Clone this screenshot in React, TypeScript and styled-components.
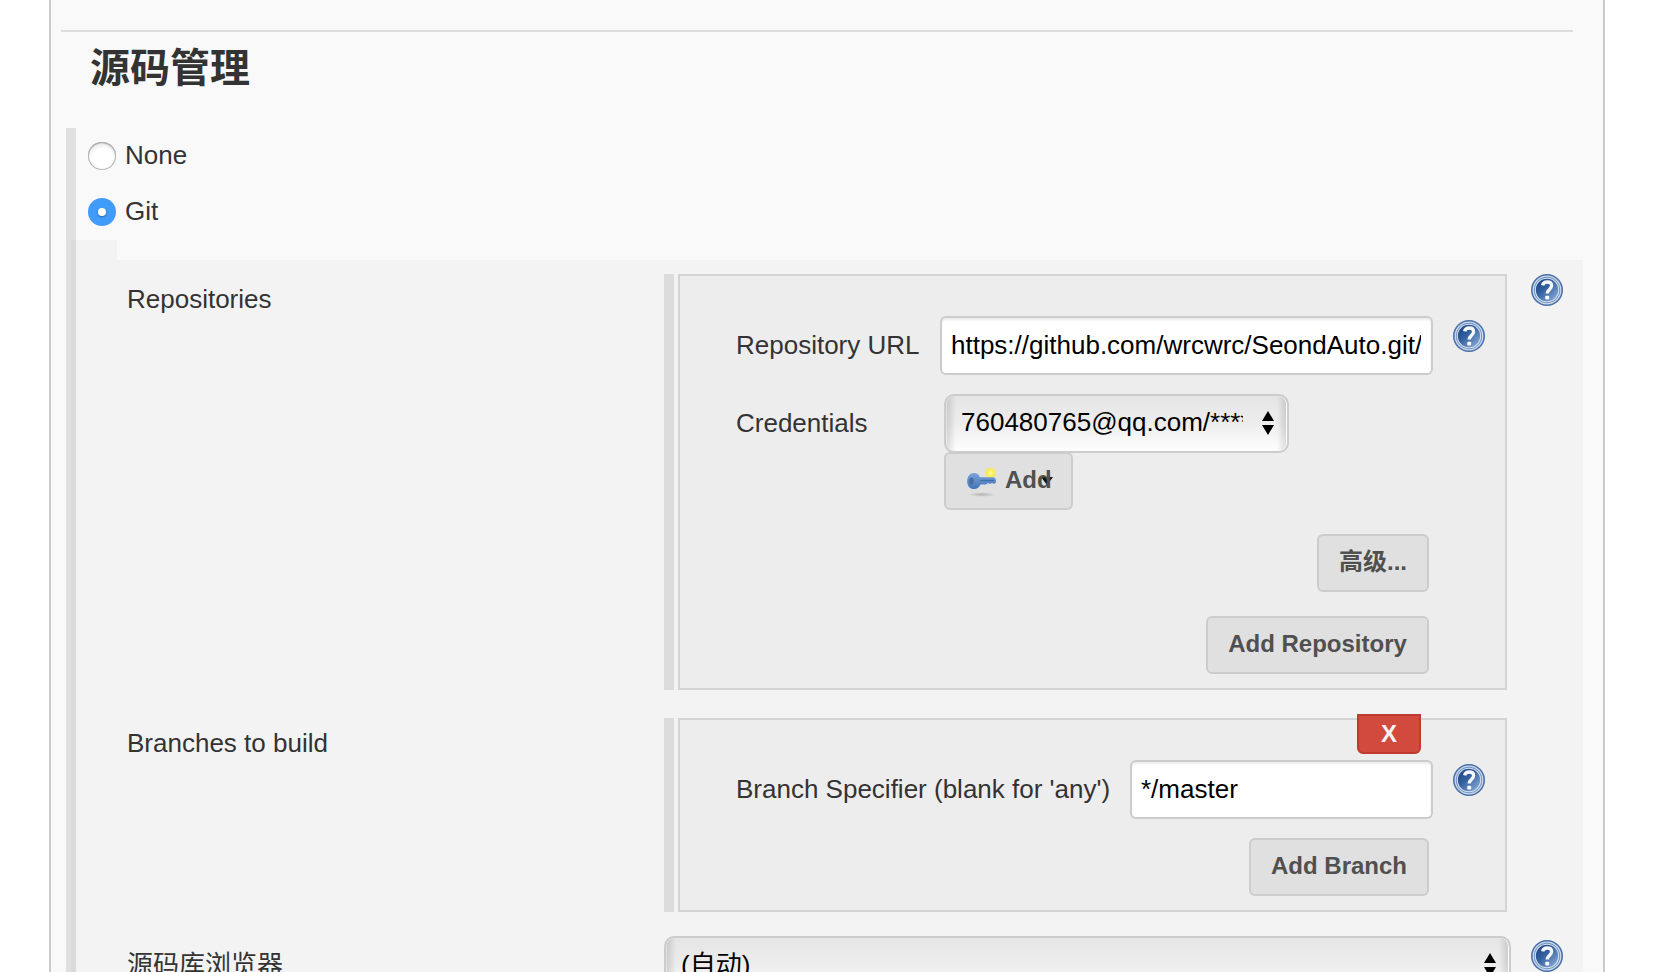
import React from "react";
import styled, { createGlobalStyle } from "styled-components";

const GlobalStyle = createGlobalStyle`
  *, *::before, *::after { box-sizing: border-box; }
  html, body { margin: 0; padding: 0; background: #fff; overflow: hidden; }
  body {
    font-family: "Liberation Sans", "Noto Sans CJK SC", sans-serif;
    font-size: 26px;
    line-height: 30px;
    color: #333;
  }
`;

const Page = styled.div`
  height: 972px;
  overflow: hidden;
  padding: 0 55px 0 49px;
`;

const Panel = styled.main`
  height: 972px;
  display: flex;
  flex-direction: column;
  border: solid #cacaca;
  border-width: 0 2px;
  background: #f9f9f9;
  padding: 30px 20px 0 10px;
`;

const Divider = styled.hr`
  flex: none;
  width: 1512px;
  height: 2px;
  margin: 0;
  border: 0;
  background: #ddd;
`;

const SectionTitle = styled.h2`
  flex: none;
  margin: 6px 0 0 29px;
  height: 90px;
  font-size: 40px;
  line-height: 60px;
  font-weight: 700;
`;

const ScmBlock = styled.section`
  flex: 1;
  min-height: 0;
  display: flex;
  margin-left: 5px;
  background: linear-gradient(#e0e0e0, #e0e0e0) 0 0 / 10px 100% no-repeat;
`;

const ScmContent = styled.div`
  flex: 1;
  display: flex;
  flex-direction: column;
  padding-left: 5px;
`;

const RadioList = styled.div`
  flex: none;
  height: 112px;
  padding: 14px 0 0 17px;
  display: flex;
  flex-direction: column;
  gap: 28px;
`;

const RadioRow = styled.label`
  height: 28px;
  display: flex;
  align-items: center;
  gap: 9px;
`;

const RadioDot = styled.span<{ $on?: boolean }>`
  width: 28px;
  height: 28px;
  border-radius: 50%;
  display: flex;
  align-items: center;
  justify-content: center;
  background: ${(p) => (p.$on ? "#419bf9" : "#fff")};
  box-shadow: ${(p) =>
    p.$on ? "none" : "inset 0 0 0 1px #b4b4b4, inset 0 1px 1px #8e8e8e, inset 0 3px 4px rgba(0,0,0,.12)"};
  &::after {
    content: "";
    width: 8px;
    height: 8px;
    border-radius: 50%;
    background: #fff;
    box-shadow: ${(p) => (p.$on ? "0 1px 2px rgba(0,0,0,.35)" : "none")};
  }
`;

const RadioText = styled.span`
  padding-bottom: 2px;
`;

const FormTab = styled.div`
  flex: none;
  width: 46px;
  height: 20px;
  background: rgba(0, 0, 0, 0.024);
`;

const GitForm = styled.div`
  flex: 1;
  display: flex;
  flex-direction: column;
  background: rgba(0, 0, 0, 0.024);
  padding-top: 14px;
`;

const FieldRow = styled.div<{ $gap: number }>`
  flex: none;
  display: grid;
  grid-template-columns: 593px 847px 1fr;
  align-items: start;
  margin-bottom: ${(p) => p.$gap}px;
`;

const FieldLabel = styled.div<{ $top: number }>`
  padding: ${(p) => p.$top}px 0 0 56px;
`;

const HelpCell = styled.div<{ $top?: number }>`
  padding: ${(p) => p.$top ?? 0}px 0 0 20px;
`;

const RepeatBox = styled.div<{ $h: number }>`
  width: 843px;
  height: ${(p) => p.$h}px;
  display: flex;
  gap: 4px;
  &::before {
    content: "";
    flex: none;
    width: 10px;
    background: #dcdcdc;
  }
`;

const BoxBody = styled.div`
  position: relative;
  flex: 1;
  min-width: 0;
  display: flex;
  flex-direction: column;
  border: 2px solid #d4d4d4;
  background: #ededed;
  padding: 40px 20px 0 56px;
`;

const EntryRow = styled.div`
  display: flex;
  align-items: flex-start;
`;

const EntryLabel = styled.div<{ $w: number }>`
  flex: none;
  width: ${(p) => p.$w}px;
  padding-top: 14px;
  white-space: nowrap;
`;

const CredentialLabel = styled(EntryLabel)`
  padding-top: 33px;
`;

const CredentialStack = styled.div`
  display: flex;
  flex-direction: column;
  align-items: flex-start;
  padding-top: 19px;
`;

const TextInput = styled.input`
  flex: 1;
  min-width: 0;
  height: 59px;
  padding: 0 10px 0 9px;
  border: 2px solid #ccc;
  border-radius: 6px;
  background: #fff;
  box-shadow: inset 0 2px 2px rgba(0, 0, 0, 0.075);
  font: inherit;
  color: #000;
  outline: none;
`;

const HelpButton = styled.a`
  display: block;
  flex: none;
  width: 32px;
  height: 32px;
  margin: 4px 0 0 20px;
`;

const SelectBox = styled.div<{ $w: number; $clip: number; $drop?: number }>`
  flex: none;
  width: ${(p) => p.$w}px;
  height: 59px;
  display: flex;
  align-items: flex-start;
  justify-content: space-between;
  padding: 11px 13px 0 15px;
  border: 2px solid #ccc;
  border-radius: 10px;
  background:
    linear-gradient(90deg, rgba(0,0,0,.14), rgba(0,0,0,0) 10px, rgba(0,0,0,0) calc(100% - 10px), rgba(0,0,0,.14)),
    linear-gradient(#e5e5e5, #ededed 50%, #fefefe);
  box-shadow: inset 1px 0 0 rgba(255,255,255,.45), inset -1px 0 0 #fff;
  color: #000;
  & > span {
    width: ${(p) => p.$clip}px;
    padding-top: ${(p) => p.$drop ?? 0}px;
    overflow: hidden;
    white-space: nowrap;
  }
  & > svg {
    display: block;
    margin-top: 4px;
  }
`;

const Button = styled.button<{ $w: number }>`
  width: ${(p) => p.$w}px;
  height: 58px;
  display: flex;
  align-items: flex-start;
  justify-content: center;
  padding: 11px 0 0;
  border: 2px solid #ccc;
  border-radius: 6px;
  background: #e0e0e0;
  font: 700 24px/30px "Liberation Sans", "Noto Sans CJK SC", sans-serif;
  color: #505050;
  white-space: nowrap;
`;

const AddButton = styled(Button)`
  position: relative;
  margin-top: -1px;
  justify-content: flex-start;
  padding-left: 20px;
  gap: 7px;
  & > svg:first-child {
    margin-top: 2px;
  }
  & > span {
    position: relative;
    z-index: 1;
  }
`;

const MenuCaret = styled.svg`
  position: absolute;
  left: 95px;
  top: 23px;
`;

const Actions = styled.div<{ $mt: number }>`
  display: flex;
  flex-direction: column;
  align-items: flex-end;
  gap: 24px;
  margin-top: ${(p) => p.$mt}px;
  padding-right: 56px;
`;

const DeleteButton = styled.button`
  position: absolute;
  top: -6px;
  right: 84px;
  width: 64px;
  height: 40px;
  padding: 0;
  border: 2px solid #bf3a30;
  border-radius: 0 0 6px 6px;
  background: #d24a3d;
  color: #f3f3f3;
  font: 700 24px/30px "Liberation Sans", sans-serif;
`;

const Help = () => (
  <svg width="32" height="32" viewBox="0 0 32 32" display="block" aria-label="help">
    <defs>
      <linearGradient id="ball" x1="0.1" y1="0.1" x2="0.9" y2="0.9">
        <stop offset="0" stopColor="#1f4788" />
        <stop offset="0.4" stopColor="#33609f" />
        <stop offset="1" stopColor="#86a9d6" />
      </linearGradient>
    </defs>
    <circle cx="16" cy="16" r="16" fill="#4870aa" />
    <circle cx="16" cy="16" r="13.8" fill="#6f90c0" stroke="#ccd8ea" strokeWidth="1.3" />
    <circle cx="16" cy="16" r="11.7" fill="url(#ball)" stroke="#d5e0ef" strokeWidth="1.1" />
    <path
      d="M11.6 11.4C12.2 8.9 14 8 16.2 8c2.8 0 4.4 1.5 4.4 3.8 0 3.6-4.4 3.7-4.4 7.6"
      fill="none"
      stroke="#f6f8fc"
      strokeWidth="3.3"
    />
    <rect x="14.2" y="21.8" width="4" height="3.8" rx="1" fill="#f6f8fc" />
  </svg>
);

const Arrows = () => (
  <svg width="12" height="24" viewBox="0 0 12 24">
    <path d="M6 0L12 10H0zM0 14H12L6 24z" fill="#000" />
  </svg>
);

const KeyIcon = () => (
  <svg width="32" height="32" viewBox="0 0 32 32">
    <defs>
      <radialGradient id="glow">
        <stop offset="0" stopColor="#fffb9a" />
        <stop offset="0.6" stopColor="#f7ec50" />
        <stop offset="1" stopColor="#f7ec50" stopOpacity="0" />
      </radialGradient>
      <radialGradient id="shade">
        <stop offset="0" stopColor="#000" stopOpacity="0.2" />
        <stop offset="1" stopColor="#000" stopOpacity="0" />
      </radialGradient>
      <linearGradient id="metal" x1="0" y1="0" x2="0" y2="1">
        <stop offset="0" stopColor="#7aa5d8" />
        <stop offset="1" stopColor="#4273b5" />
      </linearGradient>
    </defs>
    <ellipse cx="16" cy="27.5" rx="14" ry="2.4" fill="url(#shade)" />
    <circle cx="24.5" cy="6" r="6.4" fill="url(#glow)" />
    <path
      d="M8 6c3 0 5 1.600 6 4.200H28l2 2.200v3.200l-2 1.500-2-1-2 1-2-1-2 1.500h-5.500c-1 2.600-3.200 4.500-6.500 4.500C4 22.100 1.200 19 1.200 14.200S4 6 8 6z"
      fill="url(#metal)"
    />
    <ellipse cx="5.500" cy="14" rx="2.200" ry="3.500" fill="#4c6d9d" />
    <path d="M14 13.500H28" stroke="#3f6eae" strokeWidth="1.300" />
  </svg>
);

const HelpLink = () => (
  <HelpButton>
    <Help />
  </HelpButton>
);

export default function App() {
  return (
    <>
      <GlobalStyle />
      <Page>
        <Panel>
          <Divider />
          <SectionTitle>源码管理</SectionTitle>
          <ScmBlock>
            <ScmContent>
              <RadioList>
                <RadioRow>
                  <RadioDot />
                  <RadioText>None</RadioText>
                </RadioRow>
                <RadioRow>
                  <RadioDot $on />
                  <RadioText>Git</RadioText>
                </RadioRow>
              </RadioList>
              <FormTab />
              <GitForm>
                <FieldRow $gap={28}>
                  <FieldLabel $top={10}>Repositories</FieldLabel>
                  <RepeatBox $h={416}>
                    <BoxBody>
                      <EntryRow>
                        <EntryLabel $w={204}>Repository URL</EntryLabel>
                        <TextInput readOnly value="https://github.com/wrcwrc/SeondAuto.git/" />
                        <HelpLink />
                      </EntryRow>
                      <EntryRow>
                        <CredentialLabel $w={208}>Credentials</CredentialLabel>
                        <CredentialStack>
                          <SelectBox $w={345} $clip={282}>
                            <span>760480765@qq.com/******</span>
                            <Arrows />
                          </SelectBox>
                          <AddButton $w={129}>
                            <KeyIcon />
                            <span>Add</span>
                            <MenuCaret width="12" height="8" viewBox="0 0 12 8">
                              <path d="M0 0H12L6 8z" fill="#111" />
                            </MenuCaret>
                          </AddButton>
                        </CredentialStack>
                      </EntryRow>
                      <Actions $mt={24}>
                        <Button $w={112}>高级...</Button>
                        <Button $w={223}>Add Repository</Button>
                      </Actions>
                    </BoxBody>
                  </RepeatBox>
                  <HelpCell>
                    <Help />
                  </HelpCell>
                </FieldRow>
                <FieldRow $gap={24}>
                  <FieldLabel $top={10}>Branches to build</FieldLabel>
                  <RepeatBox $h={194}>
                    <BoxBody>
                      <DeleteButton>X</DeleteButton>
                      <EntryRow>
                        <EntryLabel $w={394}>Branch Specifier (blank for 'any')</EntryLabel>
                        <TextInput readOnly value="*/master" />
                        <HelpLink />
                      </EntryRow>
                      <Actions $mt={19}>
                        <Button $w={180}>Add Branch</Button>
                      </Actions>
                    </BoxBody>
                  </RepeatBox>
                </FieldRow>
                <FieldRow $gap={0}>
                  <FieldLabel $top={14}>源码库浏览器</FieldLabel>
                  <SelectBox $w={847} $clip={400} $drop={1}>
                    <span>(自动)</span>
                    <Arrows />
                  </SelectBox>
                  <HelpCell $top={4}>
                    <Help />
                  </HelpCell>
                </FieldRow>
              </GitForm>
            </ScmContent>
          </ScmBlock>
        </Panel>
      </Page>
    </>
  );
}
